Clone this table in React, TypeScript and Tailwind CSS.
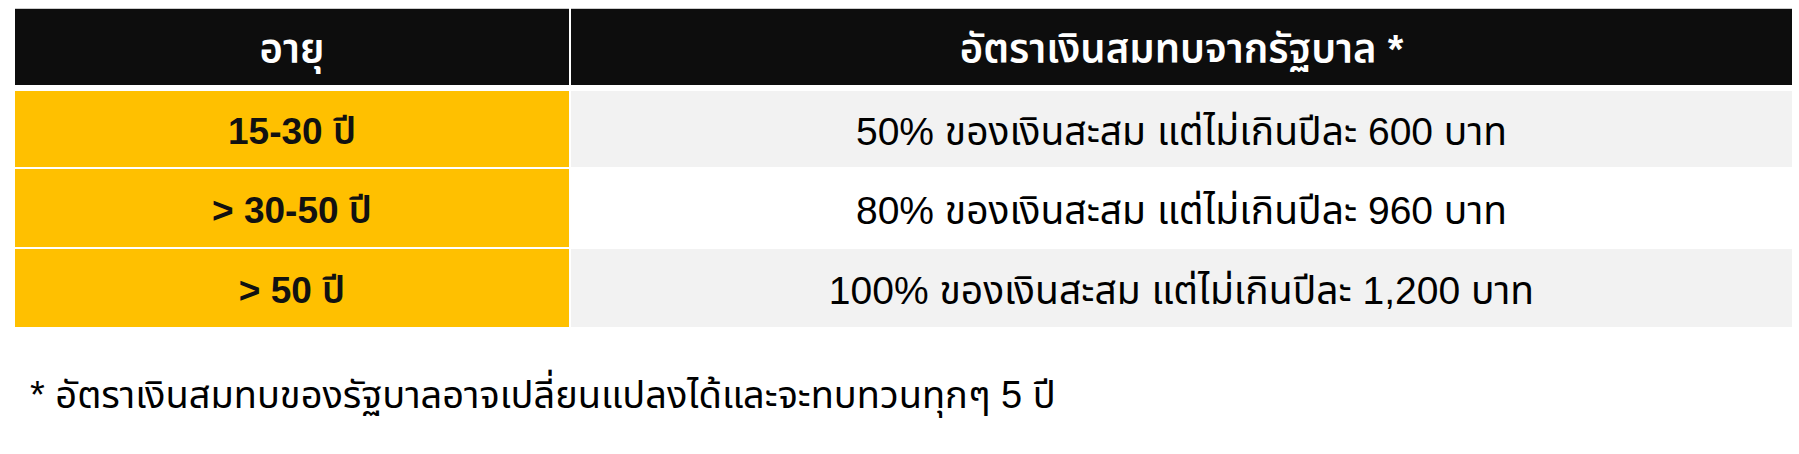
import React from "react";

const rows = [
  { age: "15-30 ปี", rate: "50% ของเงินสะสม แต่ไม่เกินปีละ 600 บาท", bg: "bg-[#f2f2f2]", h: "h-[76px]" },
  { age: "> 30-50 ปี", rate: "80% ของเงินสะสม แต่ไม่เกินปีละ 960 บาท", bg: "bg-white", h: "h-[78px]" },
  { age: "> 50 ปี", rate: "100% ของเงินสะสม แต่ไม่เกินปีละ 1,200 บาท", bg: "bg-[#f2f2f2]", h: "h-[78px]" },
];

export default function App() {
  return (
    <div
      className="w-[1799px] h-[454px] bg-white pl-[15px] pt-[8px] overflow-hidden"
      style={{ fontFamily: '"Liberation Sans", "Noto Sans", "Noto Sans Thai", sans-serif' }}
    >
      <div className="w-[1777px] flex flex-col">
        <div className="grid grid-cols-[554px_1221px] gap-x-[2px] h-[77px]">
          <div className="border-t border-[#cccccc] bg-[#0d0d0d] flex items-center justify-center text-white text-[40px] font-semibold leading-none pt-[4px]">
            อายุ
          </div>
          <div className="border-t border-[#cccccc] bg-[#0d0d0d] flex items-center justify-center text-white text-[40px] font-semibold leading-none pt-[4px]">
            อัตราเงินสมทบจากรัฐบาล *
          </div>
        </div>
        <div className="flex flex-col gap-y-[2px] mt-[6px]">
          {rows.map((r) => (
            <div key={r.age} className={`grid grid-cols-[554px_1221px] gap-x-[2px] ${r.h}`}>
              <div className="bg-[#ffc000] flex items-center justify-center text-[#111111] text-[37px] font-semibold leading-none pt-[4px]">
                {r.age}
              </div>
              <div className={`${r.bg} flex items-center justify-center text-black text-[39px] leading-none pt-[4px]`}>
                {r.rate}
              </div>
            </div>
          ))}
        </div>
      </div>
      <div className="mt-[44px] pl-[15px] text-black text-[38px] leading-[48px]">
        * อัตราเงินสมทบของรัฐบาลอาจเปลี่ยนแปลงได้และจะทบทวนทุกๆ 5 ปี
      </div>
    </div>
  );
}
